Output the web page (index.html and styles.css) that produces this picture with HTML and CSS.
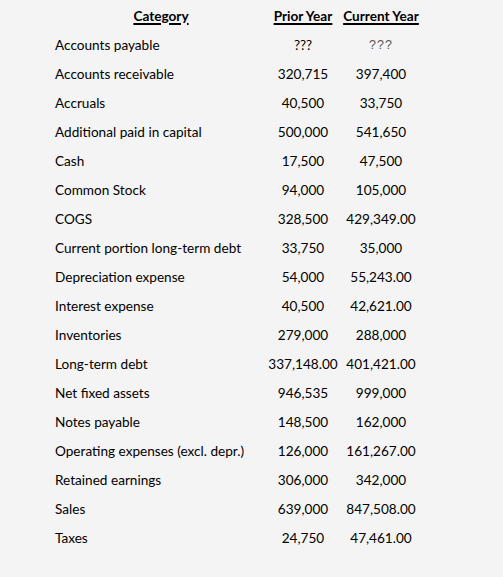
FILE: index.html
```html
<!DOCTYPE html>
<html>
<head>
<meta charset="utf-8">
<link rel="stylesheet" href="styles.css">
</head>
<body>
<div class="sheet">
  <div class="table">
    <div class="row head">
      <div class="cat"><span class="u">Category</span></div>
      <div class="num"><span class="u">Prior Year</span></div>
      <div class="num"><span class="u">Current Year</span></div>
    </div>
    <div class="row"><div class="cat">Accounts payable</div><div class="num">???</div><div class="num q">???</div></div>
    <div class="row"><div class="cat">Accounts receivable</div><div class="num">320,715</div><div class="num">397,400</div></div>
    <div class="row"><div class="cat">Accruals</div><div class="num">40,500</div><div class="num">33,750</div></div>
    <div class="row"><div class="cat">Additional paid in capital</div><div class="num">500,000</div><div class="num">541,650</div></div>
    <div class="row"><div class="cat">Cash</div><div class="num">17,500</div><div class="num">47,500</div></div>
    <div class="row"><div class="cat">Common Stock</div><div class="num">94,000</div><div class="num">105,000</div></div>
    <div class="row"><div class="cat">COGS</div><div class="num">328,500</div><div class="num">429,349.00</div></div>
    <div class="row"><div class="cat">Current portion long-term debt</div><div class="num">33,750</div><div class="num">35,000</div></div>
    <div class="row"><div class="cat">Depreciation expense</div><div class="num">54,000</div><div class="num">55,243.00</div></div>
    <div class="row"><div class="cat">Interest expense</div><div class="num">40,500</div><div class="num">42,621.00</div></div>
    <div class="row"><div class="cat">Inventories</div><div class="num">279,000</div><div class="num">288,000</div></div>
    <div class="row"><div class="cat">Long-term debt</div><div class="num">337,148.00</div><div class="num">401,421.00</div></div>
    <div class="row"><div class="cat">Net fixed assets</div><div class="num">946,535</div><div class="num">999,000</div></div>
    <div class="row"><div class="cat">Notes payable</div><div class="num">148,500</div><div class="num">162,000</div></div>
    <div class="row"><div class="cat">Operating expenses (excl. depr.)</div><div class="num">126,000</div><div class="num">161,267.00</div></div>
    <div class="row"><div class="cat">Retained earnings</div><div class="num">306,000</div><div class="num">342,000</div></div>
    <div class="row"><div class="cat">Sales</div><div class="num">639,000</div><div class="num">847,508.00</div></div>
    <div class="row"><div class="cat">Taxes</div><div class="num">24,750</div><div class="num">47,461.00</div></div>
  </div>
</div>
</body>
</html>
```

FILE: styles.css
```css
html, body {
  margin: 0;
  padding: 0;
  background: #f4f4f4;
}
body {
  font-family: "Lato", "Liberation Sans", sans-serif;
  font-size: 13.6px;
  color: #000;
}
.sheet {
  width: 503px;
  height: 577px;
  box-sizing: border-box;
  padding: 1px 0 0 55px;
}
.table {
  display: flex;
  flex-direction: column;
}
.row {
  display: grid;
  grid-template-columns: 212px 72px 84px;
  height: 29px;
  align-items: center;
}
.head .cat {
  text-align: center;
}
.head {
  font-weight: bold;
}
.u {
  text-decoration: underline;
  text-underline-offset: 2px;
  text-decoration-thickness: 1.5px;
}
.num {
  text-align: center;
  white-space: nowrap;
}
.q {
  font-family: "Liberation Sans", sans-serif;
  font-size: 12.5px;
  color: #555;
  letter-spacing: 1px;
}
```
